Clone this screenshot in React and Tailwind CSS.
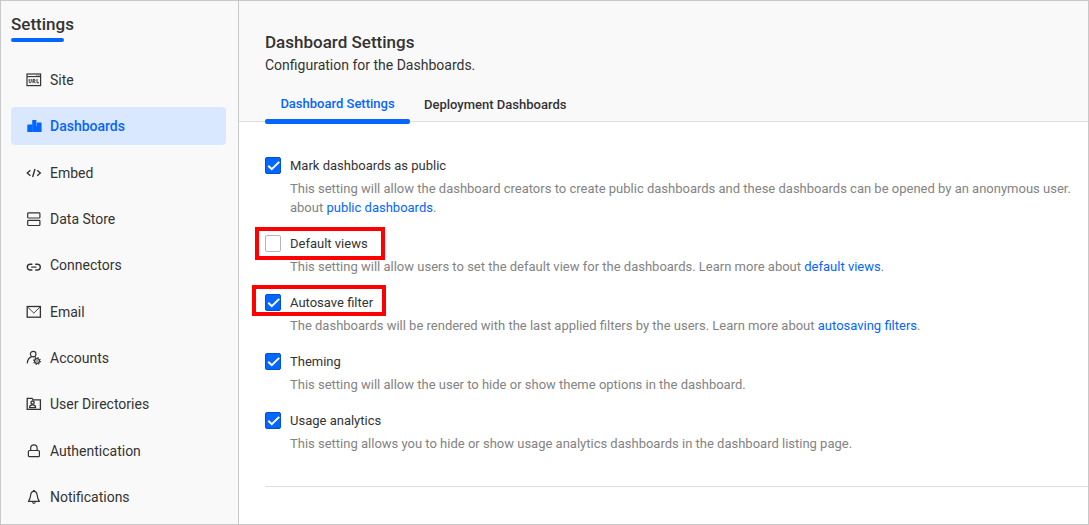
import { useState } from "react";

function Icon({ children }) {
  return (
    <svg
      className="h-4 w-4 shrink-0"
      viewBox="0 0 16 16"
      fill="none"
      stroke="currentColor"
      strokeWidth="1.1"
      aria-hidden="true"
    >
      {children}
    </svg>
  );
}

const icons = {
  site: (
    <>
      <rect x="1" y="2" width="13.600" height="11.600" strokeWidth="1.200" />
      <path d="M1 4.600h13.600" />
      <path d="M10.400 3.400h1M12.400 3.400h1" strokeWidth="0.8" />
      <path
        d="M3.200 7v2.800q0 1 1 1t1-1V7M7 11.200V7.400h1.100q1 0 1 .9t-1 .9H7M8.100 9.200l1.200 2M11 7v3.800h2"
        strokeWidth="1"
      />
    </>
  ),
  dashboards: (
    <g fill="currentColor" stroke="none">
      <rect x="1.300" y="6.500" width="5.200" height="7.500" rx="0.6" />
      <rect x="6.200" y="2" width="4.200" height="12" rx="0.6" />
      <rect x="10.700" y="4.500" width="4.900" height="9.500" rx="0.6" />
      <rect x="9" y="8" width="3" height="6" />
    </g>
  ),
  embed: <path d="M4.400 5.200L1.300 8l3.100 2.800M11.200 5.200l3.100 2.800-3.100 2.800M9 4L6.600 12" strokeWidth="1.400" />,
  store: (
    <>
      <rect x="1.700" y="1.800" width="12.200" height="5.200" rx="0.8" strokeWidth="1.200" />
      <rect x="1.700" y="9.300" width="12.200" height="5.200" rx="0.8" strokeWidth="1.200" />
    </>
  ),
  connectors: (
    <path
      d="M6.400 13H4.200a2.900 2.900 0 0 1 0-5.800h2.200M9.200 7.200h2.200a2.900 2.900 0 0 1 0 5.800H9.200M5.200 10.100h5.200"
      strokeWidth="1.400"
    />
  ),
  email: (
    <>
      <rect x="1.200" y="2.500" width="13.200" height="10.700" strokeWidth="1.300" />
      <path d="M1.500 2.900L7.800 9.100l6.300-6.200" strokeWidth="0.9" />
    </>
  ),
  accounts: (
    <>
      <circle cx="7.200" cy="4.100" r="2.800" strokeWidth="1.200" />
      <path d="M1.300 13.400c.2-3.500 1.700-5.900 4.300-6.500M8.800 6.700l1.300.8" strokeWidth="1.200" />
      <circle cx="11" cy="11" r="2.400" strokeWidth="1.300" />
      <circle cx="11" cy="11" r="0.8" fill="currentColor" stroke="none" />
      <circle cx="11" cy="11" r="3.400" strokeWidth="1.100" strokeDasharray="1.3 1.37" />
    </>
  ),
  directories: (
    <>
      <path d="M1.200 13.400V2.400h4.800l1.200 1.500h7.200v9.500z" strokeWidth="1.300" />
      <circle cx="6.600" cy="6.600" r="1.600" strokeWidth="1.300" />
      <path d="M3.600 11.600c0-1.800 1.200-2.800 3-2.800s3 1 3 2.800z" strokeWidth="1.300" />
    </>
  ),
  lock: (
    <>
      <rect x="2.400" y="7.500" width="11" height="6.200" rx="1" strokeWidth="1.200" />
      <path d="M4.700 7.400V5a3.200 3.200 0 0 1 6.400 0v2.400" strokeWidth="1.200" />
    </>
  ),
  bell: (
    <>
      <path
        d="M7.900 2.400c-2.100 0-3 1.500-3.200 3.500C4.400 8.900 4 10.500 2.400 12.400h11c-1.600-1.900-2-3.500-2.300-6.500-.2-2-1.100-3.500-3.200-3.500z"
        strokeLinejoin="round"
        strokeWidth="1.200"
      />
      <path d="M6.900 1.600h2M6.300 13.400q1.600 1.800 3.200 0" strokeWidth="1.200" />
    </>
  ),
};

const navItems = [
  ["Site", "site"],
  ["Dashboards", "dashboards"],
  ["Embed", "embed"],
  ["Data Store", "store"],
  ["Connectors", "connectors"],
  ["Email", "email"],
  ["Accounts", "accounts"],
  ["User Directories", "directories"],
  ["Authentication", "lock"],
  ["Notifications", "bell"],
];

const settings = [
  {
    id: "public",
    label: "Mark dashboards as public",
    text: "This setting will allow the dashboard creators to create public dashboards and these dashboards can be opened by an anonymous user. about ",
    link: "public dashboards",
    on: true,
  },
  {
    id: "views",
    label: "Default views",
    text: "This setting will allow users to set the default view for the dashboards. Learn more about ",
    link: "default views",
    on: false,
    mark: "-left-[10px] -top-[7px] h-[33px] w-[130px]",
  },
  {
    id: "autosave",
    label: "Autosave filter",
    text: "The dashboards will be rendered with the last applied filters by the users. Learn more about ",
    link: "autosaving filters",
    on: true,
    mark: "-left-[13px] -top-[8px] h-[31px] w-[134px]",
  },
  {
    id: "theming",
    label: "Theming",
    text: "This setting will allow the user to hide or show theme options in the dashboard.",
    on: true,
  },
  {
    id: "usage",
    label: "Usage analytics",
    text: "This setting allows you to hide or show usage analytics dashboards in the dashboard listing page.",
    on: true,
  },
];

function Setting({ item }) {
  const [on, setOn] = useState(item.on);
  return (
    <div className="relative grid grid-cols-[16px_1fr] gap-x-[9px] gap-y-1">
      <span className="grid h-[19px] items-center">
        <input
          id={item.id}
          type="checkbox"
          checked={on}
          onChange={(e) => setOn(e.target.checked)}
          aria-describedby={item.id + "-help"}
          className="peer col-start-1 row-start-1 h-[17px] w-4 appearance-none rounded-[2px] border border-[#b5b5b5] bg-white checked:border-[#0052cc] checked:bg-[#0565ff]"
        />
        <svg
          viewBox="0 0 16 16"
          className="pointer-events-none invisible col-start-1 row-start-1 h-4 w-4 peer-checked:visible"
          fill="none"
          stroke="white"
          strokeWidth="2"
          aria-hidden="true"
        >
          <path d="M3.300 7.700l3.500 3.400 7.400-7.200" />
        </svg>
      </span>
      <label htmlFor={item.id} className="justify-self-start text-[#333]">
        {item.label}
      </label>
      <p id={item.id + "-help"} className="col-start-2 text-[#838383]">
        {item.text}
        {item.link && (
          <>
            <a href="#docs" className="text-[#0565ff]">
              {item.link}
            </a>
            .
          </>
        )}
      </p>
      {item.mark && (
        <span
          className={"pointer-events-none absolute border-4 border-[#fe0000] " + item.mark}
          aria-hidden="true"
        />
      )}
    </div>
  );
}

export default function App() {
  return (
    <div className="flex min-h-screen border border-[#c8c8c8] bg-white font-['Roboto',sans-serif] text-[#333]">
      <aside className="flex w-[238px] shrink-0 flex-col border-r border-[#c8c8c8] bg-[#f9f9f9] pr-3 pb-2 pl-[10px]">
        <div className="pt-[13px] pb-[19px]">
          <h2 className="text-[17px] leading-5 font-medium">Settings</h2>
          <div className="mt-1 h-1 w-[53px] rounded-full bg-[#0565ff]" />
        </div>
        <nav className="flex max-h-[455px] flex-1 flex-col justify-between text-sm">
          {navItems.map(([label, icon]) => (
            <a
              key={label}
              href="#settings"
              aria-current={label === "Dashboards" ? "page" : undefined}
              className={
                "flex h-[38px] items-center gap-2 rounded-[4px] pl-[15px] " +
                (label === "Dashboards" ? "bg-[#dae8ff] font-medium text-[#0565ff]" : "")
              }
            >
              <Icon>{icons[icon]}</Icon>
              {label}
            </a>
          ))}
        </nav>
      </aside>
      <main className="min-w-0 flex-1">
        <header className="border-b border-[#dfdfdf] bg-[#f9f9f9] pt-[31px] pl-[26px]">
          <h1 className="text-[17px] leading-5 font-medium">Dashboard Settings</h1>
          <p className="mt-[3px] text-sm leading-5">Configuration for the Dashboards.</p>
          <div role="tablist" className="mt-[14px] -mb-[3px] flex text-[13px] leading-5 font-medium">
            <button
              role="tab"
              aria-selected="true"
              className="w-[145px] text-[#0565ff]"
            >
              <span className="block pt-[5px] pb-[5px]">Dashboard Settings</span>
              <span className="block h-[5px] rounded-[2px] bg-[#0565ff]" />
            </button>
            <button role="tab" aria-selected="false" className="px-[14px] pb-1">
              Deployment Dashboards
            </button>
          </div>
        </header>
        <section className="pt-[34px] pl-[26px] text-[13px] leading-[19px]">
          <div className="flex flex-col gap-[17px]">
            {settings.map((item) => (
              <Setting key={item.id} item={item} />
            ))}
          </div>
          <hr className="mt-[33px] border-[#dfdfdf]" />
        </section>
      </main>
    </div>
  );
}
